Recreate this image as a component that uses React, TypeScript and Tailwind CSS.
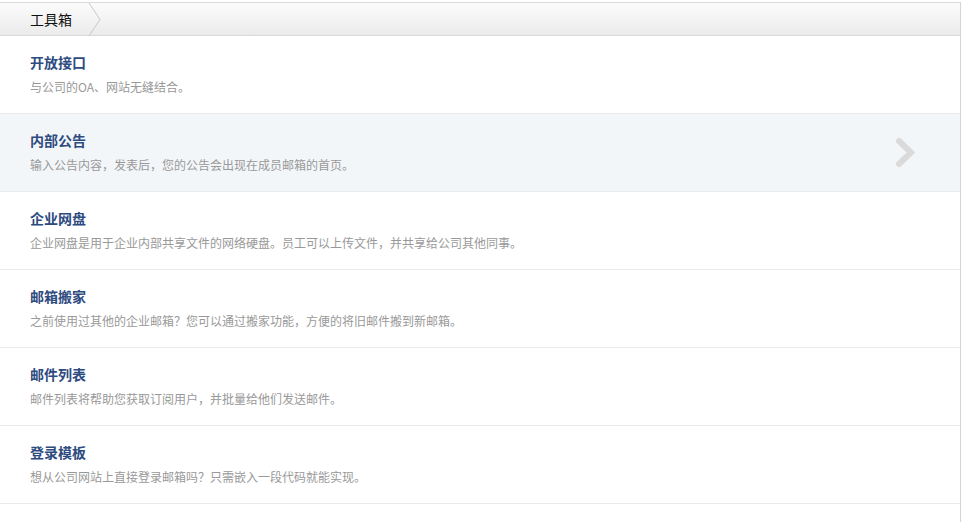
import React from "react";

const items = [
  { t: "开放接口", d: "与公司的OA、网站无缝结合。" },
  { t: "内部公告", d: "输入公告内容，发表后，您的公告会出现在成员邮箱的首页。", active: true },
  { t: "企业网盘", d: "企业网盘是用于企业内部共享文件的网络硬盘。员工可以上传文件，并共享给公司其他同事。" },
  { t: "邮箱搬家", d: "之前使用过其他的企业邮箱？您可以通过搬家功能，方便的将旧邮件搬到新邮箱。" },
  { t: "邮件列表", d: "邮件列表将帮助您获取订阅用户，并批量给他们发送邮件。" },
  { t: "登录模板", d: "想从公司网站上直接登录邮箱吗？只需嵌入一段代码就能实现。" },
];

export default function App() {
  return (
    <div
      className="w-[964px] h-[522px] bg-white overflow-hidden pt-[2px]"
      style={{ fontFamily: '"Noto Sans CJK SC", "Noto Sans", sans-serif' }}
    >
      <div className="w-[961px] border-r border-[#d4d4d4] h-[520px]">
        <div className="h-[34px] border-t border-b border-[#d9d9d9] bg-gradient-to-b from-[#fbfbfb] to-[#ebebeb] flex items-center">
          <span className="pl-[30px] text-[14px] text-[#111] leading-none">工具箱</span>
          <svg width="14" height="33" viewBox="0 0 14 33" className="ml-[16px]">
            <path d="M1 0 L12 16.5 L1 33" fill="none" stroke="#c8c8c8" strokeWidth="1" />
          </svg>
        </div>
        {items.map((it) => (
          <div
            key={it.t}
            className={`relative flex flex-col pl-[30px] pt-[16px] pb-[16px] border-b border-[#ebebeb] ${
              it.active ? "bg-[#f3f6f9]" : "bg-white"
            }`}
          >
            <div className="text-[14px] leading-[20px] font-bold text-[#2d4b7f]">{it.t}</div>
            <div className="mt-[5px] text-[12px] leading-[20px] text-[#999]">{it.d}</div>
            {it.active && (
              <svg
                width="24"
                height="34"
                viewBox="0 0 24 34"
                className="absolute right-[43px] top-[22px]"
              >
                <path d="M6 5 L18 16.5 L6 28" fill="none" stroke="#dadada" strokeWidth="6" strokeLinecap="round" strokeLinejoin="miter" />
              </svg>
            )}
          </div>
        ))}
      </div>
    </div>
  );
}
